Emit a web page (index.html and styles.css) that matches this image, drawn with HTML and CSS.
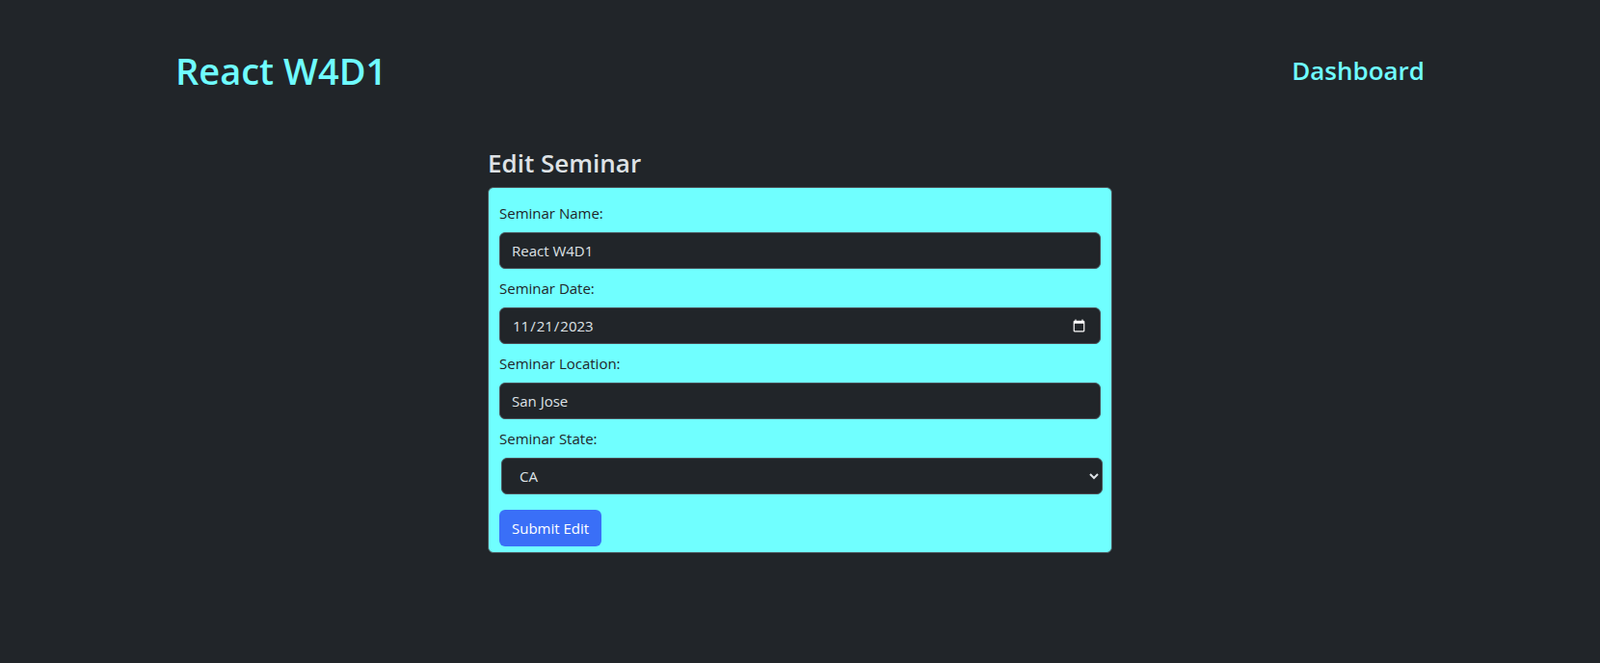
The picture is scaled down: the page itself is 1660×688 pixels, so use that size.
FILE: index.html
```html
<!DOCTYPE html>
<html lang="en">
<head>
    <meta charset="UTF-8">
    <meta name="viewport" content="width=device-width, initial-scale=1.0">
    <title>React W4D1</title>
    <link rel="stylesheet" href="styles.css">
</head>
<body>

    <!-- Top bar -->
    <nav class="topbar">
        <h1 class="brand">React W4D1</h1>
        <a class="nav-link" href="#">Dashboard</a>
    </nav>

    <main class="page">
        <h3 class="page-title">Edit Seminar</h3>

        <!-- Edit form -->
        <form class="seminar-card" id="edit-form">
            <div class="form-group">
                <label for="seminar-name">Seminar Name:</label>
                <input type="text" id="seminar-name" class="field" value="React W4D1">
            </div>
            <div class="form-group">
                <label for="seminar-date">Seminar Date:</label>
                <input type="date" id="seminar-date" class="field" value="2023-11-21">
            </div>
            <div class="form-group">
                <label for="seminar-location">Seminar Location:</label>
                <input type="text" id="seminar-location" class="field" value="San Jose">
            </div>
            <div class="form-group">
                <label for="seminar-state">Seminar State:</label>
                <select id="seminar-state" class="field field-select">
                    <option>AZ</option>
                    <option selected>CA</option>
                    <option>NV</option>
                    <option>OR</option>
                    <option>WA</option>
                </select>
            </div>
            <button type="submit" class="btn-submit">Submit Edit</button>
        </form>
    </main>

</body>
</html>
```

FILE: styles.css
```css
body {
    font-family: 'Open Sans', 'Noto Sans', sans-serif;
    margin: 0;
    background: #212529;
    color: #dee2e6;
    font-size: 16px;
    line-height: 24px;
}

.topbar {
    width: 1296px;
    margin: 0 auto;
    padding-top: 49px;
    display: flex;
    justify-content: space-between;
    align-items: center;
}

.brand {
    margin: 0;
    font-size: 38px;
    line-height: 48px;
    font-weight: 600;
    color: #6ffcff;
}

.nav-link {
    font-size: 26px;
    line-height: 32px;
    font-weight: 600;
    color: #6ffcff;
    text-decoration: none;
}

.page {
    width: 648px;
    margin: 0 auto;
    padding-top: 55px;
}

.page-title {
    margin: 0 0 8px;
    font-size: 26px;
    line-height: 34px;
    font-weight: 600;
    color: #dee2e6;
}

.seminar-card {
    background: #70ffff;
    border: 1px solid #4a5055;
    border-radius: 6px;
    padding: 14px 11px 6px;
}

.form-group {
    margin-bottom: 8px;
}

.form-group label {
    display: block;
    margin-bottom: 8px;
    color: #212529;
    font-size: 15px;
}

.field {
    display: block;
    box-sizing: border-box;
    width: 100%;
    height: 38px;
    padding: 6px 12px;
    font-family: inherit;
    font-size: 15px;
    color: #dee2e6;
    background: #212529;
    border: 1px solid #495057;
    border-radius: 6px;
    color-scheme: dark;
    outline: none;
}

.field-select {
    margin-left: 2px;
    padding-left: 14px;
}

.btn-submit {
    display: block;
    margin-top: 16px;
    height: 38px;
    padding: 6px 13px;
    font-family: inherit;
    font-size: 15px;
    color: #fff;
    background: #3a6ff7;
    border: none;
    border-radius: 6px;
    cursor: pointer;
}
```
